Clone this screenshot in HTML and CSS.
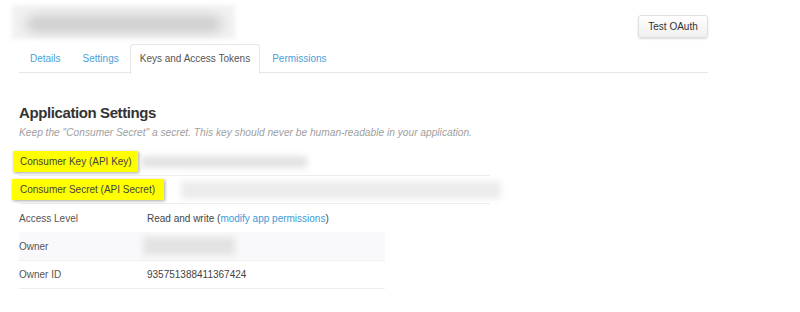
FILE: index.html
```html
<!DOCTYPE html>
<html lang="en">
<head>
  <meta charset="UTF-8" />
  <title>Keys and Access Tokens</title>
  <link rel="stylesheet" href="styles.css">
</head>
<body>
  <div class="page">
    <div class="header">
      <div class="app-name"><div class="smudge"></div></div>
      <button class="btn">Test OAuth</button>
    </div>

    <ul class="tabs">
      <li><a href="#">Details</a></li>
      <li><a href="#">Settings</a></li>
      <li class="active"><a href="#">Keys and Access Tokens</a></li>
      <li><a href="#">Permissions</a></li>
    </ul>

    <h2>Application Settings</h2>
    <p class="hint">Keep the "Consumer Secret" a secret. This key should never be human-readable in your application.</p>

    <div class="keys">
      <div class="row">
        <div class="label"><span class="mark">Consumer Key (API Key)</span></div>
        <div class="value"><div class="hidden key-val"></div></div>
      </div>
      <div class="row">
        <div class="label"><span class="mark mark-wide">Consumer Secret (API Secret)</span></div>
        <div class="value"><div class="hidden secret-val"></div></div>
      </div>
    </div>

    <div class="details">
      <div class="row">
        <div class="label">Access Level</div>
        <div class="value">Read and write (<a href="#">modify app permissions</a>)</div>
      </div>
      <div class="row striped">
        <div class="label">Owner</div>
        <div class="value"><div class="hidden owner-val"></div></div>
      </div>
      <div class="row">
        <div class="label">Owner ID</div>
        <div class="value">935751388411367424</div>
      </div>
    </div>
  </div>
</body>
</html>
```

FILE: styles.css
```css
body {
  margin: 0;
  font-family: 'Liberation Sans', Arial, sans-serif;
  font-size: 10px;
  color: #444;
  background: #fff;
}

.page {
  width: 689px;
  margin-left: 19px;
}

.header {
  display: flex;
  justify-content: space-between;
  align-items: flex-start;
  height: 44px;
}

.app-name {
  margin: 5px 0 0 -7px;
  width: 223px;
  height: 34px;
  background: #f2f2f2;
  filter: blur(2px);
  display: flex;
  align-items: center;
  justify-content: center;
  overflow: hidden;
}

.smudge {
  width: 196px;
  height: 16px;
  margin-top: 4px;
  background: #cacaca;
  border-radius: 8px;
  filter: blur(6px);
}

.btn {
  margin-top: 15px;
  width: 70px;
  height: 23px;
  padding: 0;
  font-family: inherit;
  font-size: 10px;
  color: #333;
  background: linear-gradient(#fff, #efefef);
  border: 1px solid #e0e0e0;
  border-radius: 3px;
  box-shadow: 0 1px 2px rgba(0, 0, 0, 0.15);
}

.tabs {
  list-style: none;
  margin: 0;
  padding: 0;
  display: flex;
  height: 28px;
  border-bottom: 1px solid #e6e6e6;
}

.tabs li {
  margin-right: 1px;
}

.tabs a {
  display: block;
  padding: 0 9px 0 10px;
  line-height: 28px;
  color: #4a9fd9;
  text-decoration: none;
  border: 1px solid transparent;
  border-bottom: none;
}

.tabs .active a {
  padding: 0 9px;
  color: #555;
  background: #fff;
  border-color: #e6e6e6;
  border-radius: 3px 3px 0 0;
  height: 29px;
  line-height: 28px;
}

h2 {
  margin: 30px 0 0;
  font-size: 15px;
  letter-spacing: -0.4px;
  line-height: 20px;
  font-weight: bold;
  color: #333;
}

.hint {
  margin: 3px 0 0;
  line-height: 14px;
  font-size: 10.2px;
  font-style: italic;
  color: #a0a0a0;
}

.keys {
  width: 471px;
  margin-top: 8px;
}

.details {
  width: 366px;
}

.row {
  box-sizing: border-box;
  display: grid;
  grid-template-columns: 128px 1fr;
  align-items: center;
  height: 28px;
  border-bottom: 1px solid #eee;
}

.details .row:first-child {
  border-bottom: none;
}

.label {
  color: #555;
  white-space: nowrap;
}

.striped {
  height: 29px;
  background: #f9f9fb;
  border-bottom: 1px solid #f0f0f0;
}

.mark {
  display: inline-block;
  margin-left: -6px;
  padding: 0 6px 0 7px;
  line-height: 21px;
  background: #ffff00;
  color: #444;
  white-space: nowrap;
  box-shadow: 1px 1px 3px rgba(0, 0, 0, 0.35);
}

.mark-wide {
  margin-left: -7px;
  padding: 0 9px 0 8px;
}

.value a {
  color: #3b9ad8;
  text-decoration: none;
}

.hidden {
  background: #e3e3e3;
  filter: blur(3px);
}

.key-val {
  margin-left: -6px;
  width: 166px;
  height: 12px;
}

.secret-val {
  margin-left: 34px;
  width: 320px;
  height: 18px;
  background: #ececec;
}

.owner-val {
  margin-left: -4px;
  width: 92px;
  height: 18px;
}
```
